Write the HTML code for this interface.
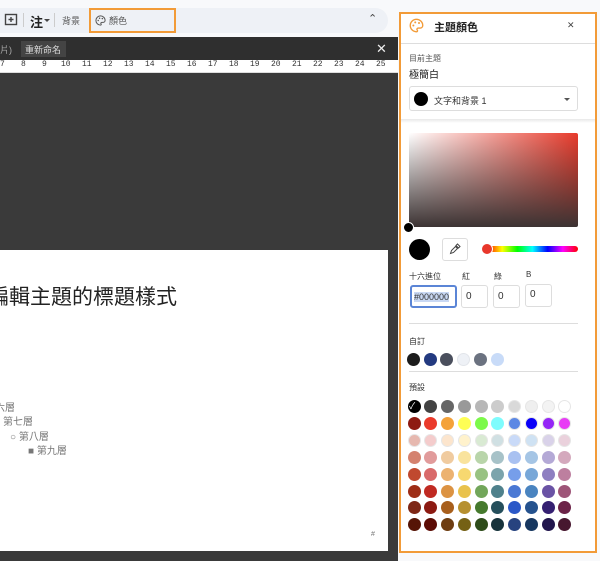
<!DOCTYPE html><html><head><meta charset="utf-8"><style>
*{box-sizing:border-box;margin:0;padding:0}
body{width:600px;height:561px;overflow:hidden;background:#f8f9fb;position:relative;font-family:"Liberation Sans","Noto Sans CJK TC",sans-serif;}
.a{position:absolute}
.c{position:absolute;width:13px;height:13px;border-radius:50%}
</style></head><body>
<div class="a" style="left:-20px;top:8px;width:408px;height:25px;background:#eef1f6;border-radius:13px"></div>
<svg class="a" style="left:4px;top:13px" width="14" height="14" viewBox="0 0 14 14"><rect x="1.5" y="1.5" width="11" height="10" fill="none" stroke="#444" stroke-width="1.4"/><path d="M7 4v5M4.5 6.5h5" stroke="#444" stroke-width="1.4"/></svg>
<div class="a" style="left:23px;top:13px;width:1px;height:14px;background:#ccc"></div>
<div class="a" style="left:30px;top:12px;font-size:13px;font-weight:bold;color:#222">注</div>
<div class="a" style="left:44px;top:19px;border:3px solid transparent;border-top-color:#444"></div>
<div class="a" style="left:54px;top:13px;width:1px;height:14px;background:#ccc"></div>
<div class="a" style="left:62px;top:14px;font-size:9px;color:#555">背景</div>
<div class="a" style="left:89px;top:8px;width:87px;height:25px;border:2px solid #f29b38"></div>
<svg class="a" style="left:95px;top:15px" width="11" height="11" viewBox="0 0 12 12"><path d="M6 1a5 5 0 1 0 0 10c1 0 1-1 .5-1.5S6.5 8 7.5 8H9a2 2 0 0 0 2-2c0-3-2.5-5-5-5z" fill="none" stroke="#555" stroke-width="1.1"/><circle cx="3.5" cy="6" r=".8" fill="#555"/><circle cx="5" cy="3.5" r=".8" fill="#555"/><circle cx="8" cy="4" r=".8" fill="#555"/></svg>
<div class="a" style="left:109px;top:14px;font-size:9px;color:#555">顏色</div>
<div class="a" style="left:368px;top:12px;font-size:11px;color:#444">⌃</div>
<div class="a" style="left:0;top:37px;width:398px;height:524px;background:#3a3a3a"></div>
<div class="a" style="left:0;top:37px;width:398px;height:23px;background:#2f2f2f"></div>
<div class="a" style="left:0;top:43px;font-size:9px;color:#aaa">片)</div>
<div class="a" style="left:21px;top:41px;width:45px;height:16px;background:#444;color:#ddd;font-size:9px;padding:2px 4px">重新命名</div>
<div class="a" style="left:376px;top:41px;color:#eee;font-size:13px">✕</div>
<div class="a" style="left:0;top:60px;width:398px;height:13px;background:#fff;border-bottom:1px solid #ddd"></div>
<div class="a" style="left:0;top:60px;width:398px;height:13px;font-family:'Liberation Mono',monospace;font-size:8px;color:#333">
<span class="a" style="left:0">7</span><span class="a" style="left:21px">8</span><span class="a" style="left:42px">9</span><span class="a" style="left:61px">10</span><span class="a" style="left:82px">11</span><span class="a" style="left:103px">12</span><span class="a" style="left:124px">13</span><span class="a" style="left:145px">14</span><span class="a" style="left:166px">15</span><span class="a" style="left:187px">16</span><span class="a" style="left:208px">17</span><span class="a" style="left:229px">18</span><span class="a" style="left:250px">19</span><span class="a" style="left:271px">20</span><span class="a" style="left:292px">21</span><span class="a" style="left:313px">22</span><span class="a" style="left:334px">23</span><span class="a" style="left:355px">24</span><span class="a" style="left:376px">25</span></div>
<div class="a" style="left:0;top:250px;width:388px;height:301px;background:#fff"></div>
<div class="a" style="left:-12px;top:281px;font-size:21px;color:#222">編輯主題的標題樣式</div>
<div class="a" style="left:-5px;top:399px;font-size:10px;color:#777">六層</div>
<div class="a" style="left:3px;top:413px;font-size:10px;color:#777">第七層</div>
<div class="a" style="left:10px;top:428px;font-size:10px;color:#777">○ 第八層</div>
<div class="a" style="left:28px;top:442px;font-size:10px;color:#777">■ 第九層</div>
<div class="a" style="left:371px;top:531px;font-size:7px;color:#777">#</div>
<div class="a" style="left:399px;top:12px;width:198px;height:541px;background:#fff;border:2px solid #f29b38"></div>
<svg class="a" style="left:409px;top:18px" width="15" height="15" viewBox="0 0 12 12"><path d="M6 1a5 5 0 1 0 0 10c1 0 1-1 .5-1.5S6.5 8 7.5 8H9a2 2 0 0 0 2-2c0-3-2.5-5-5-5z" fill="none" stroke="#f29b38" stroke-width="1.1"/><circle cx="3.5" cy="6" r=".8" fill="#f29b38"/><circle cx="5" cy="3.5" r=".8" fill="#f29b38"/><circle cx="8" cy="4" r=".8" fill="#f29b38"/></svg>
<div class="a" style="left:434px;top:19px;font-size:11px;font-weight:bold;color:#222">主題顏色</div>
<div class="a" style="left:567px;top:20px;font-size:9px;color:#444">✕</div>
<div class="a" style="left:401px;top:43px;width:194px;height:1px;background:#ddd"></div>
<div class="a" style="left:409px;top:53px;font-size:8px;color:#555">目前主題</div>
<div class="a" style="left:409px;top:66px;font-size:10px;color:#222">極簡白</div>
<div class="a" style="left:409px;top:86px;width:169px;height:25px;border:1px solid #ddd;border-radius:3px"></div>
<div class="a" style="left:414px;top:92px;width:14px;height:14px;border-radius:50%;background:#000"></div>
<div class="a" style="left:434px;top:94px;font-size:9px;color:#333">文字和背景 1</div>
<div class="a" style="left:564px;top:98px;border:3px solid transparent;border-top-color:#555"></div>
<div class="a" style="left:401px;top:119px;width:194px;height:4px;background:linear-gradient(#e8e8e8,#fff)"></div>
<div class="a" style="left:409px;top:133px;width:169px;height:94px;border-radius:2px;background:linear-gradient(to top,#3c3333,rgba(0,0,0,0)),linear-gradient(to right,#fff,#e83a2b)"></div>
<div class="a" style="left:403px;top:222px;width:11px;height:11px;border-radius:50%;background:#000;border:1px solid #fff"></div>
<div class="a" style="left:409px;top:239px;width:21px;height:21px;border-radius:50%;background:#000"></div>
<div class="a" style="left:442px;top:238px;width:26px;height:23px;border:1px solid #ddd;border-radius:3px"></div>
<svg class="a" style="left:449px;top:243px" width="12" height="12" viewBox="0 0 12 12"><path d="M1.5 10.5l1-3 4-4 2 2-4 4zM7 2.5l1.5-1.5 2.5 2.5-1.5 1.5z" fill="none" stroke="#444" stroke-width="1"/></svg>
<div class="a" style="left:487px;top:246px;width:91px;height:6px;border-radius:3px;background:linear-gradient(to right,#f00,#ff0,#0f0,#0ff,#00f,#f0f,#f00)"></div>
<div class="a" style="left:481px;top:243px;width:12px;height:12px;border-radius:50%;background:#e8372b;border:1px solid #fff"></div>
<div class="a" style="left:409px;top:271px;font-size:8px;color:#333">十六進位</div>
<div class="a" style="left:462px;top:271px;font-size:8px;color:#333">紅</div>
<div class="a" style="left:494px;top:271px;font-size:8px;color:#333">綠</div>
<div class="a" style="left:526px;top:270px;font-size:8px;color:#333">B</div>
<div class="a" style="left:410px;top:285px;width:47px;height:23px;border:2px solid #5b85d6;border-radius:3px;font-size:9px;padding:5px 2px;color:#333;white-space:nowrap;overflow:hidden"><span style="background:#c9d8f3">#000000</span></div>
<div class="a" style="left:461px;top:285px;width:27px;height:23px;border:1px solid #ddd;border-radius:3px;font-size:10px;padding:5px 4px;color:#333">0</div>
<div class="a" style="left:493px;top:285px;width:27px;height:23px;border:1px solid #ddd;border-radius:3px;font-size:10px;padding:5px 4px;color:#333">0</div>
<div class="a" style="left:525px;top:284px;width:27px;height:23px;border:1px solid #ddd;border-radius:3px;font-size:10px;padding:4px 4px;color:#333">0</div>
<div class="a" style="left:409px;top:323px;width:169px;height:1px;background:#ddd"></div>
<div class="a" style="left:409px;top:336px;font-size:8px;color:#333">自訂</div>
<div class="a" style="left:409px;top:371px;width:169px;height:1px;background:#ddd"></div>
<div class="a" style="left:409px;top:382px;font-size:8px;color:#333">預設</div>
<div id="g"></div>
<script>
var cu=["#1c1c1c","#233a80","#4a4f5d","#eef1f6","#6b7280","#c8dbf8"];
var h="";cu.forEach(function(c,i){h+='<div class="c" style="left:'+(407+i*16.7)+'px;top:353px;background:'+c+(c=="#eef1f6"?';border:1px solid #e2e5ea':'')+'"></div>'});
var P=[["#000","#434343","#666","#999","#b7b7b7","#ccc","#d9d9d9","#efefef","#f3f3f3","#fff"],
["#8e1b12","#ea3a2b","#f4a23a","#fefe55","#7cf94a","#7efcfd","#5c88e4","#0a00f8","#9425f6","#e83cf5"],
["#e6b8af","#f4cccc","#fce5cd","#fff2cc","#d9ead3","#d0e0e3","#c9daf8","#cfe2f3","#d9d2e9","#ead1dc"],
["#d4826f","#e19b9b","#f0cb9f","#f9e39d","#b9d5aa","#a7c2c8","#a9c1f1","#a5c5e5","#b4a9d6","#d4a9bd"],
["#c0492f","#d96a6a","#ecb270","#f7d870","#98c282","#7ca4ac","#769eea","#78a7d8","#8e7fc1","#bd7f9f"],
["#9e2d16","#c02a22","#dc9343","#e9c24c","#72a65a","#4f818c","#4a78d4","#4a84c0","#6a53a5","#9e5578"],
["#7e2716","#8c1a12","#a85f1c","#b69030","#467a2d","#254f5c","#2b58c8","#25528e","#352072","#6c2348"],
["#561506","#5c0c05","#6e3d11","#756115","#2e4c1a","#17333c","#27437f","#173760","#22164d","#47172f"]];
P.forEach(function(r,j){r.forEach(function(c,i){h+='<div class="c" style="left:'+(407.5+i*16.75)+'px;top:'+(400+j*16.9)+'px;background:'+c+(j<3&&i>5||j==2?';border:1px solid #e6e6e6':'')+'"></div>'})});
h+='<div class="a" style="left:409px;top:399px;color:#fff;font-size:9px">✓</div>';
document.getElementById("g").innerHTML=h;
</script>
</body></html>
